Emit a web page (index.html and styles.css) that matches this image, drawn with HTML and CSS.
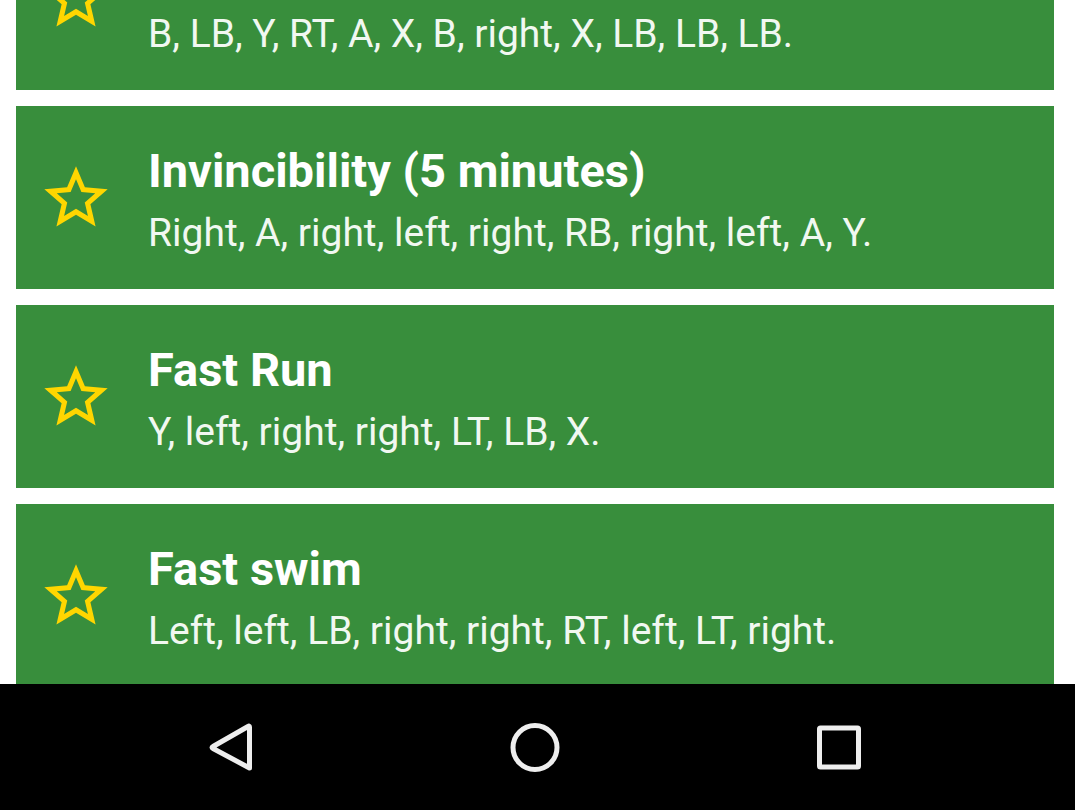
FILE: index.html
```html
<!DOCTYPE html>
<html lang="en">
<head>
<meta charset="utf-8">
<meta name="viewport" content="width=device-width, initial-scale=1">
<title>Cheats</title>
<link rel="stylesheet" href="styles.css">
</head>
<body>
<svg class="defs" aria-hidden="true">
  <symbol id="star" viewBox="0 0 24 24"><path d="M22 9.24l-7.19-.62L12 2 9.19 8.63 2 9.24l5.46 4.73L5.82 21 12 17.27 18.18 21l-1.63-7.03L22 9.24zM12 15.4l-3.76 2.27 1-4.28-3.32-2.88 4.38-.38L12 6.1l1.71 4.04 4.38.38-3.32 2.88 1 4.28L12 15.4z"/></symbol>
</svg>
<main class="list">
  <article class="card card-first">
    <button class="star" type="button" aria-label="Add to favourites"><svg><use href="#star"/></svg></button>
    <div class="text"><p class="codes">B, LB, Y, RT, A, X, B, right, X, LB, LB, LB.</p></div>
  </article>
  <article class="card">
    <button class="star" type="button" aria-label="Add to favourites"><svg><use href="#star"/></svg></button>
    <div class="text"><h2 class="title">Invincibility (5 minutes)</h2><p class="codes">Right, A, right, left, right, RB, right, left, A, Y.</p></div>
  </article>
  <article class="card">
    <button class="star" type="button" aria-label="Add to favourites"><svg><use href="#star"/></svg></button>
    <div class="text"><h2 class="title">Fast Run</h2><p class="codes">Y, left, right, right, LT, LB, X.</p></div>
  </article>
  <article class="card">
    <button class="star" type="button" aria-label="Add to favourites"><svg><use href="#star"/></svg></button>
    <div class="text"><h2 class="title">Fast swim</h2><p class="codes">Left, left, LB, right, right, RT, left, LT, right.</p></div>
  </article>
</main>
<nav class="navbar">
  <button class="key" type="button" aria-label="Back"><svg viewBox="0 0 56 56"><path d="M46.500 8v41L10 29.500q-2-1 0-2L45 7.500q1.500-1 1.500.5z"/></svg></button>
  <button class="key" type="button" aria-label="Home"><svg viewBox="0 0 56 56"><circle cx="28" cy="28.500" r="22"/></svg></button>
  <button class="key" type="button" aria-label="Recent apps"><svg viewBox="0 0 56 56"><rect x="8.500" y="9" width="39" height="39" rx="1"/></svg></button>
</nav>
</body>
</html>
```
FILE: styles.css
```css
* { box-sizing: border-box; }
body {
  margin: 0;
  height: 100vh;
  display: flex;
  flex-direction: column;
  overflow: hidden;
  background: #fff;
  font-family: Roboto, sans-serif;
}
.defs { display: none; }
.list {
  flex: 1;
  min-height: 0;
  overflow: hidden;
  display: flex;
  flex-direction: column;
  gap: 16px;
  padding: 0 21px 0 16px;
}
.card {
  flex: none;
  min-height: 183px;
  display: flex;
  align-items: center;
  gap: 34px;
  padding: 0 22px;
  background: #388e3c;
  color: #fff;
}
.card-first {
  min-height: 0;
  height: 90px;
  align-items: flex-end;
  padding-bottom: 32px;
}
.star {
  flex: none;
  width: 76px;
  height: 76px;
  padding: 0;
  border: 0;
  background: none;
}
.star svg { display: block; width: 76px; height: 76px; fill: #ffd600; }
.card-first .star { margin-bottom: 22px; }
.title { margin: 0; padding: 2px 0 8px; font-size: 47px; line-height: 60px; font-weight: 700; }
.codes { margin: 0; font-size: 39px; line-height: 48px; color: #f1f8f1; }
.navbar {
  flex: none;
  height: 126px;
  display: flex;
  justify-content: center;
  align-items: center;
  gap: 248px;
  padding-right: 5px;
  background: #000;
}
.key { width: 56px; height: 56px; padding: 0; border: 0; background: none; }
.key svg { display: block; width: 56px; height: 56px; fill: none; stroke: #eee; stroke-width: 5; stroke-linejoin: round; }
```
